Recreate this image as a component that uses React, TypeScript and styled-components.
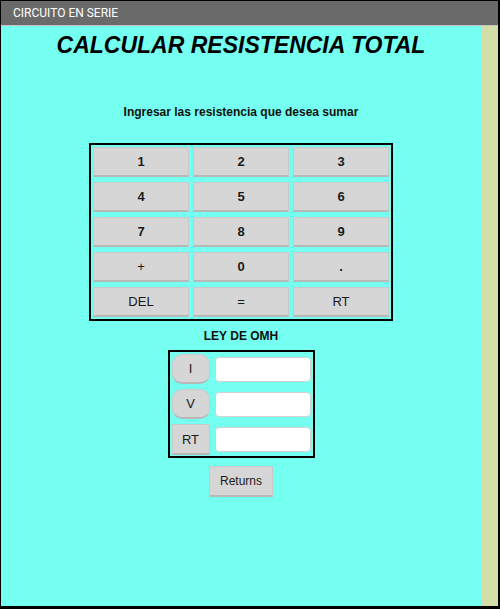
import React, { FC } from 'react';
import styled, { createGlobalStyle } from 'styled-components';

const GlobalStyle = createGlobalStyle`
    body{
        margin:0;
        font-family: 'Liberation Sans', Arial, sans-serif;
    }
`
const Frame = styled.div`
    width:500px;
    height:609px;
    box-sizing:border-box;
    border-style:solid;
    border-color:#000;
    border-width:1px 2px 3px 1px;
    display:flex;
    flex-direction:column;
`
const Header = styled.div`
    height:24px;
    background-color:#6a6a6a;
    border-bottom:1px solid #c4c4c4;
    color:#fff;
    font-family: Roboto, 'Liberation Sans', sans-serif;
    font-size:12px;
    display:flex;
    align-items:center;
    padding-left:12px;
`
const Body = styled.div`
    flex:1;
    display:flex;
`
const Main = styled.div`
    flex:1;
    background-color:#74fff0;
    display:flex;
    flex-direction:column;
    align-items:center;
`
const SideBar = styled.div`
    width:17px;
    background-color:#d3dfa6;
`
const Title = styled.h1`
    margin:6px 0 0 0;
    font-size:23px;
    font-style:italic;
    font-weight:bold;
    color:#000;
`
const Subtitle = styled.p`
    margin:46px 0 0 0;
    font-size:12px;
    font-weight:bold;
    color:#111;
`
const Keypad = styled.div`
    margin-top:24px;
    border:2px solid #000;
    padding:2px;
    display:grid;
    grid-template-columns:repeat(3, 96px);
    grid-auto-rows:30px;
    column-gap:4px;
    row-gap:5px;
`
const Key = styled.button<{ $bold?: boolean }>`
    box-sizing:border-box;
    margin:0;
    padding:0;
    background-color:#d6d6d6;
    border:1px solid #c9c9c9;
    border-bottom:2px solid #b8b8b8;
    font-family:'Liberation Sans', Arial, sans-serif;
    font-size:13px;
    font-weight:${p => p.$bold ? 'bold' : 'normal'};
    color:#1a1a1a;
`
const SectionLabel = styled.p`
    margin:8px 0 0 0;
    font-size:12px;
    font-weight:bold;
    color:#111;
`
const OhmBox = styled.div`
    margin-top:7px;
    border:2px solid #000;
    padding:2px 2px 1px 2px;
    display:flex;
    flex-direction:column;
    gap:5px;
`
const OhmRow = styled.div`
    display:flex;
    align-items:center;
    gap:5px;
`
const OhmButton = styled(Key)<{ $round?: boolean }>`
    width:38px;
    height:${p => p.$round ? '30px' : '31px'};
    border-radius:${p => p.$round ? '10px' : '0'};
`
const OhmInput = styled.input`
    box-sizing:border-box;
    width:96px;
    height:25px;
    margin:0;
    border:1px solid #d2d2d2;
    border-radius:4px;
    background-color:#fff;
`
const ReturnButton = styled(Key)`
    margin-top:8px;
    width:64px;
    height:31px;
    font-size:12px;
`

const keys = [
    { label: '1', bold: true }, { label: '2', bold: true }, { label: '3', bold: true },
    { label: '4', bold: true }, { label: '5', bold: true }, { label: '6', bold: true },
    { label: '7', bold: true }, { label: '8', bold: true }, { label: '9', bold: true },
    { label: '+', bold: false }, { label: '0', bold: true }, { label: '.', bold: true },
    { label: 'DEL', bold: false }, { label: '=', bold: false }, { label: 'RT', bold: false },
]

const ohmRows = [
    { label: 'I', round: true },
    { label: 'V', round: true },
    { label: 'RT', round: false },
]

const App: FC = () => {
    return (
        <>
            <GlobalStyle />
            <Frame>
                <Header>CIRCUITO EN SERIE</Header>
                <Body>
                    <Main>
                        <Title>CALCULAR RESISTENCIA TOTAL</Title>
                        <Subtitle>Ingresar las resistencia que desea sumar</Subtitle>
                        <Keypad>
                            {keys.map((k, i) => (
                                <Key key={i} $bold={k.bold}>{k.label}</Key>
                            ))}
                        </Keypad>
                        <SectionLabel>LEY DE OMH</SectionLabel>
                        <OhmBox>
                            {ohmRows.map((r, i) => (
                                <OhmRow key={i}>
                                    <OhmButton $round={r.round}>{r.label}</OhmButton>
                                    <OhmInput type="text" />
                                </OhmRow>
                            ))}
                        </OhmBox>
                        <ReturnButton>Returns</ReturnButton>
                    </Main>
                    <SideBar />
                </Body>
            </Frame>
        </>
    );
};

export default App;
